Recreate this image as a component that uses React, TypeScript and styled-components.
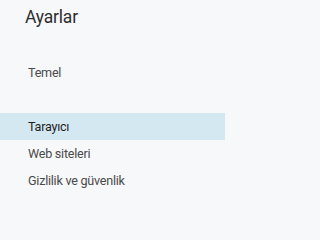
import React from "react";
import styled, { createGlobalStyle } from "styled-components";

const Global = createGlobalStyle`
  html, body { margin: 0; padding: 0; background: #f7f8fa; }
  body { font-family: "Roboto", "Open Sans", "Liberation Sans", sans-serif; }
`;

const Panel = styled.div`
  width: 225px;
  height: 200px;
  background: #f7f8fa;
  display: flex;
  flex-direction: column;
  overflow: hidden;
`;

const Title = styled.h1`
  margin: 0;
  padding: 5px 0 0 25px;
  font-size: 17.5px;
  font-weight: 400;
  line-height: 24px;
  letter-spacing: -0.2px;
  color: #2e2e2e;
`;

const Nav = styled.nav`
  display: flex;
  flex-direction: column;
  margin-top: 30px;
`;

const Spacer = styled.div`
  height: 27px;
`;

const Item = styled.div<{ $active?: boolean }>`
  height: 27px;
  line-height: 27px;
  padding-left: 28px;
  font-size: 12.6px;
  letter-spacing: -0.25px;
  color: ${(p) => (p.$active ? "#1f1f1f" : "#4a4a4a")};
  background: ${(p) => (p.$active ? "#d4e8f2" : "transparent")};
`;

export default function App() {
  return (
    <>
      <Global />
      <Panel>
        <Title>Ayarlar</Title>
        <Nav>
          <Item>Temel</Item>
          <Spacer />
          <Item $active>Tarayıcı</Item>
          <Item>Web siteleri</Item>
          <Item>Gizlilik ve güvenlik</Item>
        </Nav>
      </Panel>
    </>
  );
}
